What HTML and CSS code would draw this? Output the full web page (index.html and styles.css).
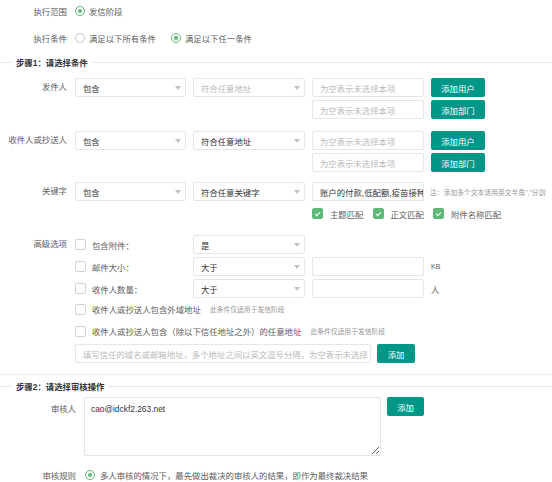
FILE: index.html
```html
<!DOCTYPE html>
<html lang="zh-CN">
<head>
<meta charset="utf-8">
<link rel="stylesheet" href="styles.css">
</head>
<body>
<div class="page">
  <div class="row r1">
    <span class="lbl">执行范围</span>
    <span class="opt"><span class="radio on"></span>发信阶段</span>
  </div>
  <div class="row r2">
    <span class="lbl">执行条件</span>
    <span class="opt"><span class="radio"></span>满足以下所有条件</span>
    <span class="opt"><span class="radio on"></span>满足以下任一条件</span>
  </div>

  <div class="legend l1">步骤1：请选择条件</div>

  <div class="item sender">
    <span class="lbl">发件人</span>
    <div class="grid">
      <div class="sel">包含</div>
      <div class="sel ph">符合任意地址</div>
      <div class="inp ph">为空表示未选择本项</div>
      <div class="btn">添加用户</div>
      <div class="inp ph c3">为空表示未选择本项</div>
      <div class="btn">添加部门</div>
    </div>
  </div>

  <div class="item recv">
    <span class="lbl">收件人或抄送人</span>
    <div class="grid">
      <div class="sel">包含</div>
      <div class="sel">符合任意地址</div>
      <div class="inp ph">为空表示未选择本项</div>
      <div class="btn">添加用户</div>
      <div class="inp ph c3">为空表示未选择本项</div>
      <div class="btn">添加部门</div>
    </div>
  </div>

  <div class="item kw">
    <span class="lbl">关键字</span>
    <div class="grid">
      <div class="sel">包含</div>
      <div class="sel">符合任意关键字</div>
      <div class="inp val">账户的付款,低配额,疫苗接种</div>
      <div class="note">注：添加多个文本请用英文半角","分割</div>
      <div class="checks">
        <span class="chk"><span class="cb on"></span>主题匹配</span>
        <span class="chk"><span class="cb on"></span>正文匹配</span>
        <span class="chk"><span class="cb on"></span>附件名称匹配</span>
      </div>
    </div>
  </div>

  <div class="item adv">
    <span class="lbl">高级选项</span>
    <div class="content">
      <div class="grid">
        <span class="cbl"><span class="cb"></span>包含附件：</span>
        <div class="sel">是</div>
        <span class="c1 cbl"><span class="cb"></span>邮件大小：</span>
        <div class="sel">大于</div>
        <div class="inp"></div>
        <span class="unit kb">KB</span>
        <span class="c1 cbl"><span class="cb"></span>收件人数量：</span>
        <div class="sel">大于</div>
        <div class="inp"></div>
        <span class="unit">人</span>
      </div>
      <div class="cbrow"><span class="cb"></span>收件人或抄送人包含外域地址<span class="tip">此条件仅适用于发信阶段</span></div>
      <div class="cbrow"><span class="cb"></span>收件人或抄送人包含（除以下信任地址之外）的任意地址<span class="tip">此条件仅适用于发信阶段</span></div>
      <div class="trust">
        <div class="inp ph wide">填写信任的域名或邮箱地址，多个地址之间以英文逗号分隔，为空表示未选择</div>
        <div class="btn add">添加</div>
      </div>
    </div>
  </div>

  <div class="sep"></div>

  <div class="legend l2">步骤2：请选择审核操作</div>

  <div class="item review">
    <span class="lbl2">审核人</span>
    <textarea class="ta">cao@idckf2.263.net</textarea>
    <div class="btn add2">添加</div>
  </div>

  <div class="row rule">
    <span class="lbl2">审核规则</span>
    <span class="radio on"></span>
    <span class="ruletext">多人审核的情况下，最先做出裁决的审核人的结果，即作为最终裁决结果</span>
  </div>
</div>
</body>
</html>
```

FILE: styles.css
```css
html, body {
  margin: 0;
  padding: 0;
}
body {
  width: 552px;
  height: 482px;
  overflow: hidden;
  background: #fff;
  font-family: "Liberation Sans", "Noto Sans CJK SC", sans-serif;
  font-size: 8.4px;
  color: #5e5e5e;
}
.page {
  width: 552px;
}
.row {
  display: flex;
  align-items: center;
  height: 22px;
}
.r2 {
  margin-top: 5px;
}
.lbl {
  flex: none;
  width: 67px;
  margin-right: 8px;
  text-align: right;
  white-space: nowrap;
}
.opt {
  display: flex;
  align-items: center;
  margin-right: 15px;
}
.radio {
  flex: none;
  display: inline-flex;
  align-items: center;
  justify-content: center;
  width: 10px;
  height: 10px;
  box-sizing: border-box;
  border: 1px solid #c2c2c2;
  border-radius: 50%;
  margin-right: 4px;
}
.radio.on {
  border-color: #5fb878;
}
.radio.on::after {
  content: "";
  width: 4px;
  height: 4px;
  border-radius: 50%;
  background: #5fb878;
}
.legend {
  display: flex;
  align-items: center;
  height: 12px;
  font-weight: bold;
  color: #333;
}
.legend::before {
  content: "";
  width: 12px;
  height: 1px;
  background: #e6e6e6;
  margin-right: 4px;
}
.legend::after {
  content: "";
  flex: 1;
  height: 1px;
  background: #e6e6e6;
  margin-left: 4px;
}
.l1 {
  margin-top: 7px;
}
.item {
  display: flex;
  align-items: flex-start;
}
.item .lbl {
  height: 19px;
  line-height: 19px;
}
.sender {
  margin-top: 10px;
}
.recv {
  margin-top: 12px;
}
.kw {
  margin-top: 10px;
}
.adv {
  margin-top: 12px;
}
.grid {
  display: grid;
  grid-template-columns: 111px 112px 112px 54px;
  column-gap: 7px;
  row-gap: 3px;
  grid-auto-rows: 19px;
}
.c1 {
  grid-column: 1;
}
.c3 {
  grid-column: 3;
}
.sel, .inp {
  display: flex;
  align-items: center;
  height: 19px;
  box-sizing: border-box;
  border: 1px solid #e6e6e6;
  border-radius: 2px;
  background: #fff;
  padding: 0 7px;
  color: #333;
  white-space: nowrap;
  overflow: hidden;
}
.sel {
  justify-content: space-between;
  padding-right: 4px;
}
.sel::after {
  content: "";
  width: 0;
  height: 0;
  border-left: 3px solid transparent;
  border-right: 3px solid transparent;
  border-top: 4px solid #c2c2c2;
  margin-top: 1px;
}
.ph {
  color: #bbb;
}
.val {
  color: #333;
}
.btn {
  display: flex;
  align-items: center;
  justify-content: center;
  height: 19px;
  background: #009688;
  color: #fff;
  border-radius: 2px;
  white-space: nowrap;
}
.note {
  grid-column: 4;
  display: flex;
  align-items: center;
  font-size: 6.8px;
  color: #999;
  white-space: nowrap;
  margin-left: -1px;
}
.checks {
  grid-column: 3 / span 3;
  display: flex;
  align-items: center;
}
.chk {
  display: flex;
  align-items: center;
  margin-right: 9px;
  white-space: nowrap;
}
.cb {
  flex: none;
  display: inline-flex;
  align-items: center;
  justify-content: center;
  width: 11px;
  height: 11px;
  box-sizing: border-box;
  border: 1px solid #d2d2d2;
  border-radius: 2px;
  background: #fff;
  margin-right: 7px;
}
.cb.on {
  background: #5fb878;
  border-color: #5fb878;
}
.cb.on::after {
  content: "";
  width: 4px;
  height: 2px;
  border-left: 1px solid #fff;
  border-bottom: 1px solid #fff;
  transform: rotate(-45deg);
  margin-top: -1px;
}
.cbl {
  display: flex;
  align-items: center;
  white-space: nowrap;
}
.cbl .cb {
  margin-right: 6px;
}
.unit {
  display: flex;
  align-items: center;
}
.kb {
  font-size: 7px;
}
.content {
  display: flex;
  flex-direction: column;
}
.cbrow {
  display: flex;
  align-items: center;
  height: 22px;
  white-space: nowrap;
}
.cbrow .cb {
  margin-right: 6px;
}
.tip {
  font-size: 6.8px;
  color: #999;
  margin-left: 9px;
}
.trust {
  display: flex;
  margin-top: 2px;
  gap: 6px;
}
.wide {
  width: 296px;
}
.add {
  width: 38px;
}
.sep {
  height: 1px;
  background: #eee;
  margin-top: 11px;
}
.l2 {
  margin-top: 5px;
}
.review {
  margin-top: 5px;
}
.lbl2 {
  flex: none;
  width: 76px;
  margin-right: 8px;
  text-align: right;
  white-space: nowrap;
}
.review .lbl2 {
  padding-top: 6px;
  line-height: 12px;
}
.ta {
  width: 297px;
  height: 59px;
  box-sizing: border-box;
  border: 1px solid #e6e6e6;
  border-radius: 2px;
  padding: 5px 6px;
  margin: 0;
  font-family: "Liberation Sans", "Noto Sans CJK SC", sans-serif;
  font-size: 8.4px;
  line-height: 12px;
  color: #333;
  resize: vertical;
  outline: none;
}
.add2 {
  width: 37px;
  margin-left: 6px;
}
.rule {
  margin-top: 8px;
}
.rule .radio {
  margin-left: 1px;
  margin-right: 5px;
}
.ruletext {
  white-space: nowrap;
}
```
